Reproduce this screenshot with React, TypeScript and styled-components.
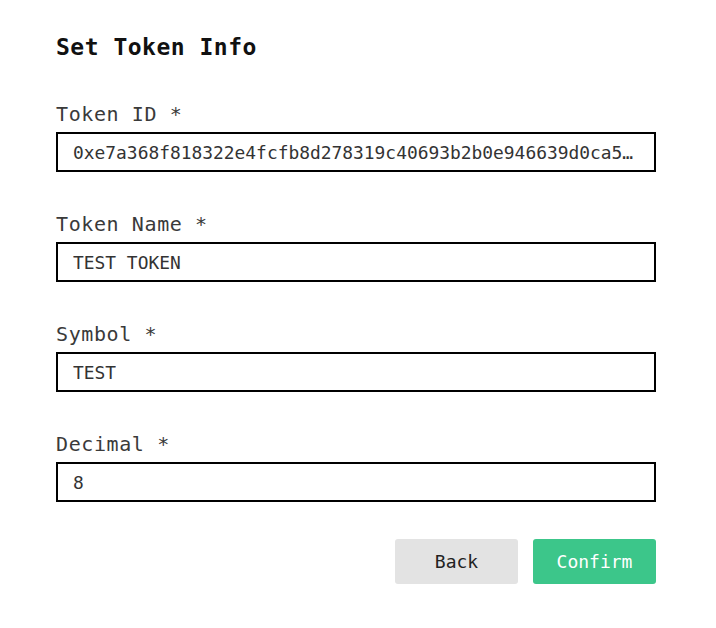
import React from "react";
import styled, { createGlobalStyle } from "styled-components";

const Global = createGlobalStyle`
  html, body { margin: 0; padding: 0; background: #fff; }
  body { font-family: "DejaVu Sans Mono", "Liberation Mono", monospace; color: #000; }
`;

const Page = styled.div`
  width: 716px;
  height: 628px;
  box-sizing: border-box;
  padding: 32px 60px 0 56px;
`;

const Title = styled.h1`
  margin: 0 0 40px;
  font-size: 23px;
  line-height: 30px;
  font-weight: bold;
  letter-spacing: 0.5px;
  color: #111;
`;

const Form = styled.div`
  display: flex;
  flex-direction: column;
  gap: 40px;
`;

const Field = styled.div`
  display: flex;
  flex-direction: column;
  gap: 6px;
`;

const Label = styled.label`
  font-size: 20px;
  line-height: 24px;
  font-weight: 300;
  color: #3a3a3a;
  letter-spacing: 0.6px;
`;

const InputBox = styled.div`
  width: 600px;
  height: 40px;
  box-sizing: border-box;
  border: 2px solid #000;
  padding: 0 14px 0 15px;
  display: flex;
  align-items: center;
  font-size: 17.9px;
  color: #333;
  white-space: nowrap;
  overflow: hidden;
`;

const Value = styled.span`
  overflow: hidden;
  text-overflow: ellipsis;
`;

const Actions = styled.div`
  display: flex;
  justify-content: flex-end;
  gap: 15px;
  margin-top: 37px;
  width: 600px;
`;

const Button = styled.button<{ $primary?: boolean }>`
  width: 123px;
  height: 45px;
  border: none;
  border-radius: 3px;
  font-family: inherit;
  font-size: 18px;
  cursor: pointer;
  background: ${(p) => (p.$primary ? "#3cc68a" : "#e3e3e3")};
  color: ${(p) => (p.$primary ? "#fff" : "#222")};
`;

const fields = [
  { label: "Token ID", value: "0xe7a368f818322e4fcfb8d278319c40693b2b0e946639d0ca5a1b2c3d4e5f" },
  { label: "Token Name", value: "TEST TOKEN" },
  { label: "Symbol", value: "TEST" },
  { label: "Decimal", value: "8" },
];

export default function App() {
  return (
    <Page>
      <Global />
      <Title>Set Token Info</Title>
      <Form>
        {fields.map((f) => (
          <Field key={f.label}>
            <Label>{f.label} *</Label>
            <InputBox>
              <Value>{f.value}</Value>
            </InputBox>
          </Field>
        ))}
      </Form>
      <Actions>
        <Button>Back</Button>
        <Button $primary>Confirm</Button>
      </Actions>
    </Page>
  );
}
